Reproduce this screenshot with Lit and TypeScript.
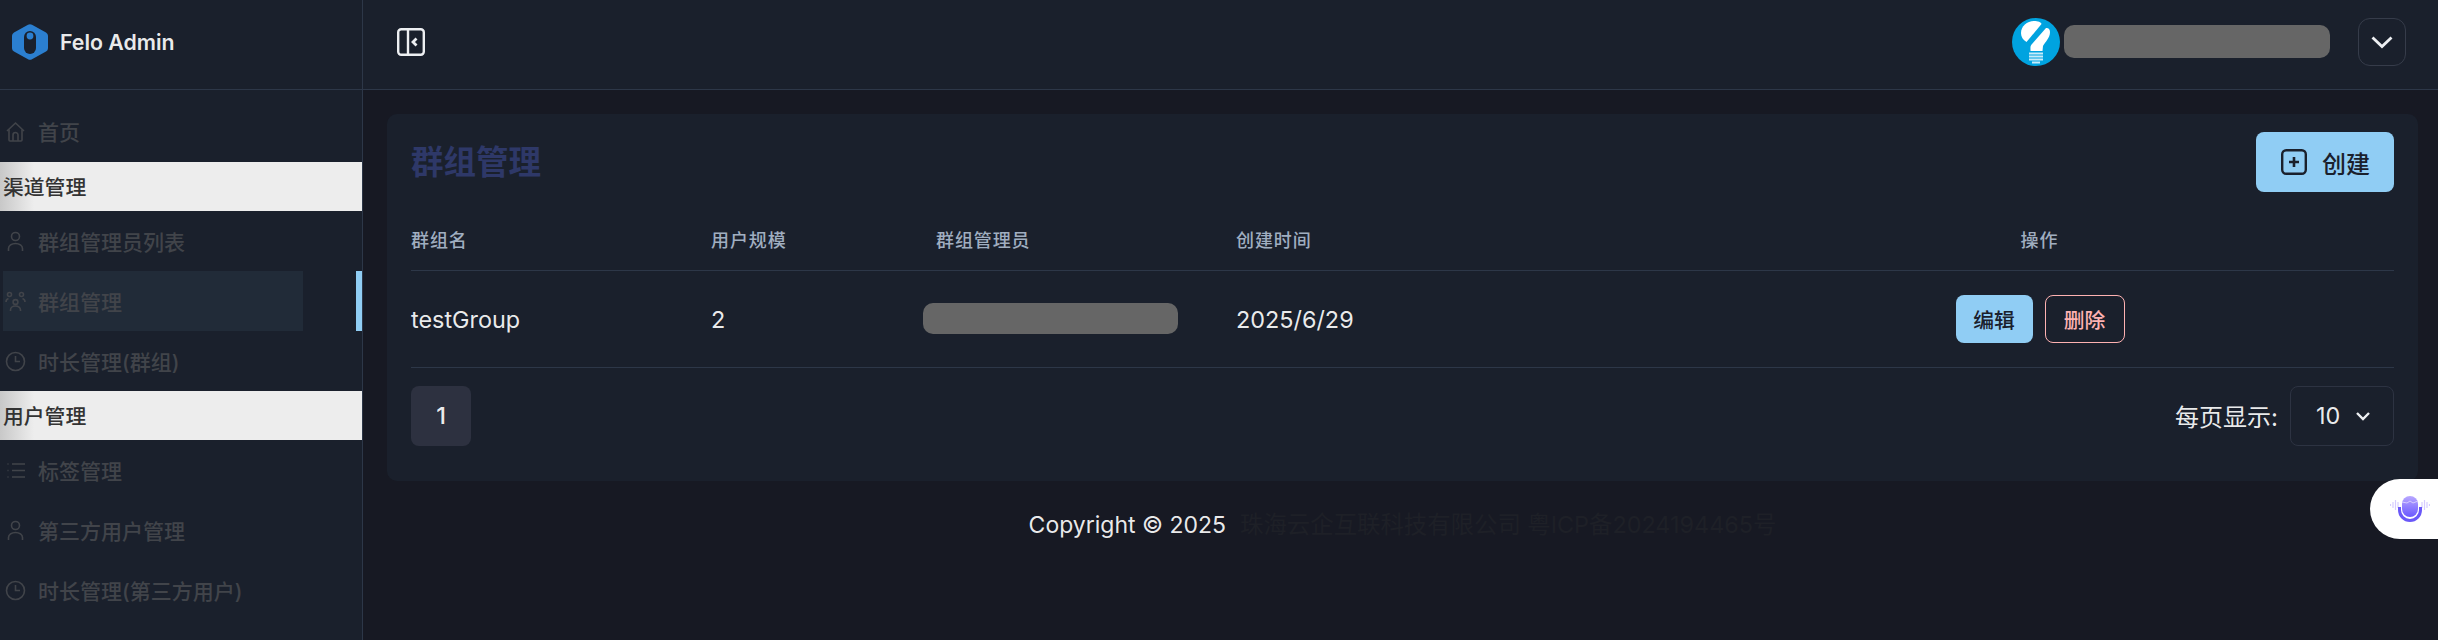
import { LitElement, html, css, svg } from "lit";
import { customElement } from "lit/decorators.js";

const icons = {
  home: svg`<path d="M2 10 10.500 2 19 10"/><path d="M4 8.500V19a1 1 0 0 0 1 1h11a1 1 0 0 0 1-1V8.500"/><path d="M8 20v-6a2.500 2.500 0 0 1 5 0v6"/>`,
  user: svg`<circle cx="10.500" cy="5.500" r="4"/><path d="M3.500 20v-2.500a7 5 0 0 1 14 0V20"/>`,
  group: svg`<circle cx="10.500" cy="11" r="2.400"/><circle cx="4.500" cy="3.500" r="2"/><circle cx="16.500" cy="3.500" r="2"/><path d="M5.500 20v-1a5 4 0 0 1 10 0v1"/><path d="M1 11c0-2 1-3 2.500-3.500M20 11c0-2-1-3-2.500-3.500"/>`,
  clock: svg`<circle cx="10.500" cy="10.500" r="9"/><path d="M10.500 5v5.500H15"/>`,
  list: svg`<path d="M7 4h13M7 10.500h13M7 17h13M2.500 4h1M2.500 10.500h1M2.500 17h1"/>`,
};

type NavRow =
  | { section: string }
  | { label: string; icon: keyof typeof icons; active?: boolean };

const nav: NavRow[] = [
  { label: "首页", icon: "home" },
  { section: "渠道管理" },
  { label: "群组管理员列表", icon: "user" },
  { label: "群组管理", icon: "group", active: true },
  { label: "时长管理(群组)", icon: "clock" },
  { section: "用户管理" },
  { label: "标签管理", icon: "list" },
  { label: "第三方用户管理", icon: "user" },
  { label: "时长管理(第三方用户)", icon: "clock" },
];

@customElement("app-root")
export class AppRoot extends LitElement {
  static styles = css`
    :host {
      display: block;
      font-family: Inter, "Noto Sans CJK SC", sans-serif;
      color: rgba(255, 255, 255, 0.92);
    }
    * {
      box-sizing: border-box;
    }
    svg {
      display: block;
      flex-shrink: 0;
    }
    .shell {
      display: flex;
      height: 640px;
      overflow: hidden;
      background: #171923;
    }
    .sidebar {
      width: 363px;
      flex-shrink: 0;
      background: #1a202c;
      border-right: 1px solid #2d3748;
    }
    .brand {
      display: flex;
      align-items: center;
      gap: 12px;
      height: 90px;
      padding-left: 12px;
      padding-bottom: 6px;
      border-bottom: 1px solid #2d3748;
      font-size: 21.3px;
      font-weight: 600;
    }
    .nav {
      padding-top: 11px;
    }
    .section {
      display: flex;
      align-items: center;
      height: 49px;
      padding: 0 0 2px 3px;
      font-size: 20.8px;
      font-weight: 500;
      color: #333;
      background: linear-gradient(90deg, #c8c8c8 0, #ededed 34px);
    }
    .item {
      display: flex;
      height: 60px;
    }
    .item:first-child {
      margin-bottom: 1px;
    }
    .item-body {
      display: flex;
      align-items: center;
      gap: 12px;
      width: 300px;
      margin-left: 3px;
      padding-left: 2px;
      font-size: 21px;
      font-weight: 500;
      color: #41444a;
    }
    .item-body svg {
      fill: none;
      stroke: #41444a;
      stroke-width: 1.6;
    }
    .active .item-body {
      background: #212b38;
    }
    .bar {
      width: 6px;
      margin-left: auto;
      background: #90cdf4;
    }
    .main {
      flex: 1;
      min-width: 0;
    }
    .topbar {
      display: flex;
      align-items: center;
      height: 90px;
      padding: 0 32px 6px 34px;
      background: #1a202c;
      border-bottom: 1px solid #2d3748;
    }
    .toggle {
      fill: none;
      stroke: #edeff2;
      stroke-width: 2.400;
    }
    .user {
      display: flex;
      align-items: center;
      gap: 4px;
      margin-left: auto;
    }
    .blank {
      background: #666;
      border-radius: 10px;
    }
    .user .blank {
      width: 266px;
      height: 33px;
    }
    .menu-btn {
      display: flex;
      align-items: center;
      justify-content: center;
      width: 48px;
      height: 48px;
      margin-left: 28px;
      border: 1px solid #363c4a;
      border-radius: 12px;
      background: #1a202c;
    }
    .content {
      padding: 24px 20px 0 24px;
    }
    .card {
      height: 367px;
      padding: 18px 24px 0 24px;
      background: #1a202c;
      border-radius: 10px;
    }
    .card-head {
      display: flex;
      align-items: center;
      justify-content: space-between;
      height: 60px;
      margin-bottom: 16px;
    }
    h2 {
      margin: 0 0 5px;
      font-size: 32.5px;
      font-weight: 700;
      color: #2e3868;
    }
    .create {
      display: flex;
      align-items: center;
      gap: 15px;
      width: 138px;
      height: 60px;
      padding-left: 25px;
      border: 0;
      border-radius: 8px;
      background: #90cdf4;
      color: #1a202c;
      font: 500 24px Inter, "Noto Sans CJK SC", sans-serif;
    }
    table {
      width: 100%;
      border-collapse: collapse;
      table-layout: fixed;
    }
    th {
      height: 62px;
      padding: 0;
      text-align: left;
      font-size: 18px;
      font-weight: 500;
      letter-spacing: 0.9px;
      color: #a0aec0;
      border-bottom: 1px solid #2d3748;
    }
    th.admin {
      padding-left: 14px;
    }
    th.ops {
      text-align: center;
    }
    td {
      height: 97px;
      padding: 1px 0 0;
      font-size: 23.4px;
      border-bottom: 1px solid #2d3748;
    }
    td .blank {
      width: 255px;
      height: 31px;
      margin: 0 0 1px 1px;
    }
    .ops-cell {
      display: flex;
      justify-content: center;
      gap: 12px;
      padding-left: 1px;
    }
    .btn {
      height: 48px;
      border-radius: 8px;
      font: 500 20.8px Inter, "Noto Sans CJK SC", sans-serif;
    }
    .edit {
      width: 77px;
      border: 0;
      background: #90cdf4;
      color: #1a202c;
    }
    .del {
      width: 80px;
      border: 1px solid #feb2b2;
      background: transparent;
      color: #feb2b2;
    }
    .pager {
      display: flex;
      align-items: center;
      justify-content: space-between;
      margin-top: 18px;
    }
    .page {
      display: flex;
      align-items: center;
      justify-content: center;
      width: 60px;
      height: 60px;
      border-radius: 8px;
      background: #2d3140;
      font-size: 23.4px;
      font-weight: 500;
    }
    .per-page {
      display: flex;
      align-items: center;
      gap: 12px;
      font-size: 24px;
    }
    .select {
      display: flex;
      align-items: center;
      gap: 15px;
      width: 104px;
      height: 60px;
      padding-left: 25px;
      border: 1px solid #2d3342;
      border-radius: 8px;
      font-size: 23.4px;
    }
    .footer {
      display: flex;
      justify-content: center;
      gap: 14px;
      padding-top: 28px;
      line-height: 32px;
      font-size: 23.4px;
    }
    .footer span {
      font-size: 23px;
    }
    .footer a {
      color: #1e2027;
      text-decoration: none;
    }
    .voice {
      position: absolute;
      top: 479px;
      right: 0;
      display: flex;
      align-items: center;
      width: 68px;
      height: 60px;
      padding-left: 20px;
      background: #fff;
      border-radius: 30px 0 0 30px;
    }
  `;

  renderRow(row: NavRow) {
    if ("section" in row) return html`<div class="section">${row.section}</div>`;
    return html`
      <div class="item ${row.active ? "active" : ""}">
        <div class="item-body">
          <svg width="21" height="21" viewBox="0 0 21 21">${icons[row.icon]}</svg>
          ${row.label}
        </div>
        ${row.active ? html`<div class="bar"></div>` : ""}
      </div>
    `;
  }

  render() {
    return html`
      <div class="shell">
        <aside class="sidebar">
          <div class="brand">
            <svg width="36" height="36" viewBox="0 0 36 36">
              <path d="M16 .8a4 4 0 0 1 4 0l14 7.600a4 4 0 0 1 2 3.500v12.200a4 4 0 0 1-2 3.500l-14 7.600a4 4 0 0 1-4 0L2 27.600a4 4 0 0 1-2-3.500V11.900a4 4 0 0 1 2-3.500z" fill="#2b7fd0"/>
              <rect x="12" y="7" width="12" height="23" rx="6" fill="#1a202c"/>
              <circle cx="18" cy="12" r="3.400" fill="#2b7fd0"/>
            </svg>
            Felo Admin
          </div>
          <nav class="nav">${nav.map((r) => this.renderRow(r))}</nav>
        </aside>

        <div class="main">
          <header class="topbar">
            <svg class="toggle" width="28" height="28" viewBox="0 0 28 28">
              <rect x="1.200" y="1.200" width="25.600" height="25.600" rx="3"/>
              <path d="M11 1v26"/>
              <path d="M19.500 10.500 16 14l3.500 3.500" stroke-width="2.800"/>
            </svg>
            <div class="user">
              <svg width="48" height="48" viewBox="0 0 48 48">
                <circle cx="24" cy="24" r="24" fill="#00a3e0"/>
                <path d="M9 15C9 8 15 3 22 3c4 0 7 1 7.500 3L14.500 24C11 22 9 19 9 15z" fill="#fff"/>
                <path d="M34 10c2-.5 4 1 4 4 0 6-5 10-7 14l-.5 5h-12c0-3-.5-5 1.500-7z" fill="#fff"/>
                <path d="M17 34.500h14v2H17zM17 37.500h14v2H17zM17 40.500h14v2H17zM20 43.500h8v2h-8z" fill="#c8ecfa"/>
              </svg>
              <div class="blank"></div>
            </div>
            <div class="menu-btn">
              <svg width="24" height="24" viewBox="0 0 24 24" fill="none" stroke="#edeff2" stroke-width="2.800">
                <path d="M2.500 7.500 12 16.500l9.500-9"/>
              </svg>
            </div>
          </header>

          <div class="content">
            <section class="card">
              <div class="card-head">
                <h2>群组管理</h2>
                <button class="create">
                  <svg width="26" height="26" viewBox="0 0 26 26" fill="none" stroke="#1a202c" stroke-width="2.400">
                    <rect x="1.200" y="1.200" width="23.600" height="23.600" rx="4"/>
                    <path d="M13 8v10M8 13h10" stroke-width="2.600"/>
                  </svg>
                  创建
                </button>
              </div>

              <table>
                <colgroup>
                  <col style="width:300px" />
                  <col style="width:211px" />
                  <col style="width:314px" />
                  <col style="width:449px" />
                  <col />
                </colgroup>
                <thead>
                  <tr>
                    <th>群组名</th>
                    <th>用户规模</th>
                    <th class="admin">群组管理员</th>
                    <th>创建时间</th>
                    <th class="ops">操作</th>
                  </tr>
                </thead>
                <tbody>
                  <tr>
                    <td>testGroup</td>
                    <td>2</td>
                    <td><div class="blank"></div></td>
                    <td>2025/6/29</td>
                    <td>
                      <div class="ops-cell">
                        <button class="btn edit">编辑</button>
                        <button class="btn del">删除</button>
                      </div>
                    </td>
                  </tr>
                </tbody>
              </table>

              <div class="pager">
                <div class="page">1</div>
                <div class="per-page">
                  每页显示:
                  <div class="select">
                    10
                    <svg width="16" height="16" viewBox="0 0 16 16" fill="none" stroke="#edeff2" stroke-width="2.400">
                      <path d="M2 5l6 6 6-6"/>
                    </svg>
                  </div>
                </div>
              </div>
            </section>

            <footer class="footer">
              <span>Copyright © 2025</span>
              <a href="#">珠海云企互联科技有限公司 粤ICP备2024194465号</a>
            </footer>
          </div>
        </div>

        <div class="voice">
          <svg width="40" height="30" viewBox="0 0 40 30" fill="none">
            <defs>
              <linearGradient id="mic" x1="0" y1="0" x2="0" y2="1">
                <stop offset="0" stop-color="#b9a8ff"/>
                <stop offset="1" stop-color="#6a58ff"/>
              </linearGradient>
            </defs>
            <path d="M.5 10v2M3 8v6M5.500 6v10M8 8v6M32 8v6M34.500 6v10M37 8v6M39.500 10v2" stroke="#d6ccff" stroke-width="1.200"/>
            <rect x="12" y="2" width="16" height="21" rx="8" fill="url(#mic)"/>
            <path d="M12 8l5 1 3-2 3 2 5-2" stroke="#d6ccff" stroke-width="1"/>
            <path d="M9.500 13v3a10.500 10.500 0 0 0 21 0v-3" stroke="#6a58f8" stroke-width="3"/>
          </svg>
        </div>
      </div>
    `;
  }
}
